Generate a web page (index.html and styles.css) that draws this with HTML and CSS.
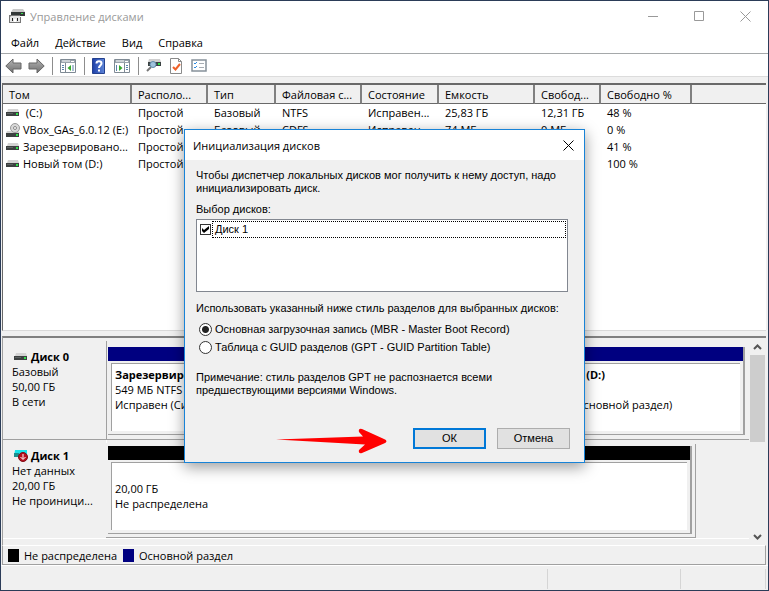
FILE: index.html
```html
<!DOCTYPE html>
<html lang="ru">
<head>
<meta charset="utf-8">
<title>Управление дисками</title>
<meta name="viewport" content="width=device-width, initial-scale=1">
<link rel="stylesheet" href="styles.css">
</head>
<body>
<svg class="defs" aria-hidden="true">
  <defs>
    <linearGradient id="metal" x1="0" y1="0" x2="0" y2="1">
      <stop offset="0" stop-color="#b4b4b4"/><stop offset="1" stop-color="#6f6f6f"/>
    </linearGradient>
    <linearGradient id="helpblue" x1="0" y1="0" x2="1" y2="0">
      <stop offset="0" stop-color="#1d3fa8"/><stop offset="1" stop-color="#5f86d8"/>
    </linearGradient>
    <symbol id="drive" viewBox="0 0 14 8">
      <path d="M2 0h10l1 3H1z" fill="#d3d3d3"/>
      <path d="M0 3h13v4H0z" fill="#3c4040"/>
      <path d="M1 4h6v1H1z" fill="#5d6262"/>
      <path d="M10 4h2v2h-2z" fill="#2fe04a"/>
    </symbol>
  </defs>
</svg>
<div class="window">
  <header class="titlebar">
    <svg class="app-icon" width="16" height="16" viewBox="0 0 16 16">
      <path d="M4 1h10l2 3H2z" fill="#c9c9c9"/>
      <path d="M2 4h14v4H2z" fill="#333838"/>
      <path d="M12 5h2v1h-2z" fill="#35e04c"/>
      <path d="M0 7h11v2h1v6H0z" fill="#777"/>
      <path d="M2 8h9v6H1V9z" fill="#e6e6e6"/>
      <path d="M3 10h1v3H3zM8 10h1v3H8z" fill="#222"/>
      <path d="M5 11h2v3H5z" fill="#fff"/>
    </svg>
    <h1 class="title">Управление дисками</h1>
    <div class="caption-buttons">
      <button type="button" aria-label="Свернуть"><svg width="11" height="11" viewBox="0 0 11 11"><path d="M0 5.500h10" stroke="#999" fill="none"/></svg></button>
      <button type="button" aria-label="Развернуть"><svg width="11" height="11" viewBox="0 0 11 11"><path d="M.5.5h9v9h-9z" stroke="#999" fill="none"/></svg></button>
      <button type="button" aria-label="Закрыть"><svg width="11" height="11" viewBox="0 0 11 11"><path d="M.5.500l10 10M10.500.5l-10 10" stroke="#999" fill="none"/></svg></button>
    </div>
  </header>
  <nav class="menu">
    <button type="button">Файл</button>
    <button type="button">Действие</button>
    <button type="button">Вид</button>
    <button type="button">Справка</button>
  </nav>
  <div class="toolbar">
    <button type="button" aria-label="Назад"><svg width="17" height="16" viewBox="0 0 17 16"><path d="M.8 8 8 1v4h8v6H8v4z" fill="url(#metal)" stroke="#666"/></svg></button>
    <button type="button" aria-label="Вперёд" class="second"><svg width="17" height="16" viewBox="0 0 17 16"><path d="M16.200 8 9 1v4H1v6h8v4z" fill="url(#metal)" stroke="#666"/></svg></button>
    <span class="sep"></span>
    <button type="button" aria-label="Дерево консоли"><svg width="17" height="14" viewBox="0 0 17 14"><path d="M.5.5h15v13H.5z" fill="#fff" stroke="#7f8a94"/><path d="M1 1h14v3H1z" fill="#9aa4ad"/><path d="M2 2h8M11 2.500h3" stroke="#fff"/><path d="M5.500 4v9" stroke="#7f8a94"/><path d="M2 6.500h2M2 8.500h2M2 10.500h2M13 6v6" stroke="#5a83ad"/><path d="M11 6v6L7.500 9z" fill="#35a82c"/></svg></button>
    <span class="sep"></span>
    <button type="button" aria-label="Справка"><svg width="14" height="16" viewBox="0 0 14 16"><path d="M.5.5h12v15H.5z" fill="url(#helpblue)" stroke="#24418f"/><path d="M4.500 5.500c0-3 5-3 5 0 0 2-2.500 2-2.500 4.500M7 11.500v2" fill="none" stroke="#fff" stroke-width="2"/></svg></button>
    <button type="button" aria-label="Область действий"><svg width="17" height="14" viewBox="0 0 17 14"><path d="M.5.5h15v13H.5z" fill="#fff" stroke="#7f8a94"/><path d="M1 1h14v3H1z" fill="#9aa4ad"/><path d="M2 2h8M11 2.500h3" stroke="#fff"/><path d="M10.500 4v9" stroke="#7f8a94"/><path d="M12 6.500h2M12 8.500h2M12 10.500h2M2.500 6v6" stroke="#5a83ad"/><path d="M5 6v6l3.500-3z" fill="#35a82c"/></svg></button>
    <span class="sep"></span>
    <button type="button" aria-label="Повторить проверку дисков"><svg width="16" height="13" viewBox="0 0 16 13"><path d="M3 0h11l1 3H2z" fill="#cfcfcf"/><path d="M2 3h13v4H2z" fill="#3b4242"/><path d="M12 4h2v2h-2z" fill="#2fe04a"/><path d="M1 12l4-4" stroke="#777" stroke-width="2"/><circle cx="7" cy="5.500" r="3" fill="#9fc3dd" stroke="#5f8aa8"/></svg></button>
    <button type="button" aria-label="Свойства"><svg width="13" height="16" viewBox="0 0 13 16"><path d="M.5.5h8l3 3v12H.5z" fill="#fff" stroke="#8a8a8a"/><path d="M8.500.5v3h3" fill="none" stroke="#8a8a8a"/><path d="M3 9l2.500 2.500L10 6" fill="none" stroke="#f0622a" stroke-width="2"/></svg></button>
    <button type="button" aria-label="Список"><svg width="17" height="13" viewBox="0 0 17 13"><path d="M1 1h14v11H1z" fill="#fff" stroke="#87919a" stroke-width="1.500"/><path d="M3 4l1 1 2-2M3 8l1 1 2-2" fill="none" stroke="#2c8be0"/><path d="M8 4.500h5M8 8.500h5" stroke="#a7adb3"/></svg></button>
  </div>

  <main class="panes">
    <section class="volumes">
      <table>
        <colgroup><col class="c-vol"><col class="c-lay"><col class="c-type"><col class="c-fs"><col class="c-state"><col class="c-cap"><col class="c-free"><col class="c-pct"><col></colgroup>
        <thead>
          <tr><th>Том</th><th>Располо...</th><th>Тип</th><th>Файловая с...</th><th>Состояние</th><th>Емкость</th><th>Свобод...</th><th>Свободно %</th><th></th></tr>
        </thead>
        <tbody>
          <tr><td><span class="vol"><svg width="14" height="8"><use href="#drive"/></svg>&nbsp;(C:)</span></td><td>Простой</td><td>Базовый</td><td>NTFS</td><td>Исправен...</td><td>25,83 ГБ</td><td>12,31 ГБ</td><td>48 %</td><td></td></tr>
          <tr><td><span class="vol"><svg width="14" height="14" viewBox="0 0 14 14"><path d="M1 8h11l2 2H0z" fill="#d3d3d3"/><path d="M0 10h13v4H0z" fill="#3c4040"/><path d="M10 11h2v2h-2z" fill="#2fe04a"/><circle cx="9" cy="5" r="4.500" fill="#d9d9d9" stroke="#999"/><circle cx="9" cy="5" r="1.500" fill="#fff" stroke="#888"/></svg>VBox_GAs_6.0.12 (E:)</span></td><td>Простой</td><td>Базовый</td><td>CDFS</td><td>Исправен...</td><td>74 МБ</td><td>0 МБ</td><td>0 %</td><td></td></tr>
          <tr><td><span class="vol"><svg width="14" height="8"><use href="#drive"/></svg>Зарезервировано...</span></td><td>Простой</td><td></td><td></td><td></td><td></td><td></td><td>41 %</td><td></td></tr>
          <tr><td><span class="vol"><svg width="14" height="8"><use href="#drive"/></svg>Новый том (D:)</span></td><td>Простой</td><td></td><td></td><td></td><td></td><td></td><td>100 %</td><td></td></tr>
        </tbody>
      </table>
    </section>

    <section class="disks">
      <div class="disk-list">
        <article class="disk">
          <div class="disk-info">
            <h2><svg width="14" height="8"><use href="#drive"/></svg>Диск 0</h2>
            <p>Базовый</p><p>50,00 ГБ</p><p>В сети</p>
          </div>
          <div class="map">
            <div class="part p-reserved primary"><div class="fill"><b>Зарезервировано</b><span>549 МБ NTFS</span><span>Исправен (Система)</span></div></div>
            <div class="part p-system primary"><div class="fill"></div></div>
            <div class="part p-data primary"><div class="fill"><b>Новый том&nbsp; (D:)</b><span></span><span>Исправен (Основной раздел)</span></div></div>
          </div>
        </article>
        <article class="disk selected">
          <div class="disk-info">
            <h2><svg width="14" height="12" viewBox="0 0 14 12"><path d="M1 0h12v7H0z" fill="#18e4ea"/><path d="M0 3h5v4H0z" fill="#1b8f8f"/><circle cx="9" cy="7" r="4.500" fill="#b80f1d" stroke="#7d0b14"/><path d="M9 4v5M6.500 7 9 9.500 11.500 7" fill="none" stroke="#fff"/></svg>Диск 1</h2>
            <p>Нет данных</p><p>20,00 ГБ</p><p>Не проиници...</p>
          </div>
          <div class="map short">
            <div class="part p-all unallocated"><div class="fill"><b></b><span>20,00 ГБ</span><span>Не распределена</span></div></div>
          </div>
        </article>
      </div>
      <div class="scrollbar">
        <svg width="9" height="6" viewBox="0 0 9 6"><path d="M1 5l3.500-3.500L8 5" fill="none" stroke="#555" stroke-width="2"/></svg>
        <div class="track"><div class="thumb"></div></div>
        <svg width="9" height="6" viewBox="0 0 9 6"><path d="M1 1l3.500 3.500L8 1" fill="none" stroke="#555" stroke-width="2"/></svg>
      </div>
    </section>
    <div class="legend">
      <span class="key"><i class="swatch black"></i>Не распределена</span>
      <span class="key"><i class="swatch navy"></i>Основной раздел</span>
    </div>
  </main>
  <footer class="status"><span class="cell grow"></span><span class="cell mid"></span><span class="cell end"></span></footer>

  <form class="dialog" role="dialog" aria-labelledby="dlg-title">
    <div class="dialog-title">
      <h2 id="dlg-title">Инициализация дисков</h2>
      <button type="button" aria-label="Закрыть окно"><svg width="11" height="11" viewBox="0 0 11 11"><path d="M.5.500l10 10M10.500.5l-10 10" stroke="#000" fill="none"/></svg></button>
    </div>
    <div class="dialog-body">
      <p>Чтобы диспетчер локальных дисков мог получить к нему доступ, надо инициализировать диск.</p>
      <p class="caption">Выбор дисков:</p>
      <div class="listbox">
        <input type="checkbox" id="disk1" checked><label for="disk1">Диск 1</label>
      </div>
      <p class="caption style-caption">Использовать указанный ниже стиль разделов для выбранных дисков:</p>
      <div class="radio"><input type="radio" name="style" id="mbr" checked><label for="mbr">Основная загрузочная запись (MBR - Master Boot Record)</label></div>
      <div class="radio"><input type="radio" name="style" id="gpt"><label for="gpt">Таблица с GUID разделов (GPT - GUID Partition Table)</label></div>
      <p class="note">Примечание: стиль разделов GPT не распознается всеми предшествующими версиями Windows.</p>
      <div class="actions">
        <svg class="pointer" width="112" height="26" viewBox="0 0 112 26" aria-hidden="true"><path d="M0 11.500 87 8.500 83 4Q82 0 86 1L108 11Q113 13 108 15.500L86 25Q82 26 83 22L89 16.500Z" fill="#f00"/></svg>
        <button type="button" class="default">ОК</button>
        <button type="button">Отмена</button>
      </div>
    </div>
  </form>
</div>
</body>
</html>
```
FILE: styles.css
```css
* { box-sizing: border-box; }

body {
  margin: 0;
  font: 11px/15px "Open Sans", "Noto Sans", sans-serif;
  color: #000;
  background: #f0f0f0;
}

h1, h2, p { margin: 0; font-size: inherit; font-weight: normal; }
svg { display: block; flex: none; }
.defs { position: absolute; width: 0; height: 0; }

button {
  font: inherit;
  color: inherit;
  border: 0;
  padding: 0;
  background: none;
}

.window {
  position: relative;
  display: flex;
  flex-direction: column;
  min-height: 100vh;
  border: 1px solid #2b3c58;
  background: #f0f0f0;
}

/* Title bar, menu and toolbar */
.titlebar {
  display: flex;
  align-items: center;
  height: 30px;
  padding-left: 8px;
  background: #fff;
}
.title { margin-left: 5px; color: #999; }
.caption-buttons { display: flex; margin-left: auto; }
.caption-buttons button {
  display: grid;
  place-items: center;
  width: 46px;
  height: 28px;
}

.menu {
  display: flex;
  gap: 16px;
  height: 23px;
  padding-left: 10px;
  border-bottom: 1px solid #a5a8aa;
  background: #fff;
}

.toolbar {
  display: flex;
  align-items: center;
  gap: 8px;
  height: 23px;
  padding: 1px 0 0 4px;
  border-bottom: 1px solid #dcdcdc;
  background: #fff;
}
.toolbar .second { margin-left: -2px; }
.sep { width: 1px; height: 18px; margin: 0 -1px; background: #8d8d8d; }

/* Volume table */
.panes { display: flex; flex: 1; flex-direction: column; padding: 6px 2px 0 1px; }
.volumes {
  flex: 1;
  min-height: 120px;
  border: 1px solid #696969;
  border-width: 2px 0 1px 1px;
  border-bottom-color: #d9d9d9;
  background: #fff;
}
table { width: 100%; border-collapse: separate; border-spacing: 0; table-layout: fixed; }
.c-vol { width: 129px; }
.c-lay { width: 76px; }
.c-type { width: 68px; }
.c-fs { width: 86px; }
.c-state { width: 77px; }
.c-cap { width: 96px; }
.c-free { width: 66px; }
.c-pct { width: 91px; }
th, td { padding: 0 0 0 6px; text-align: left; white-space: nowrap; font-weight: normal; overflow: hidden; }
th {
  height: 19px;
  background: #f0f0f0;
  border-right: 2px solid #808080;
  border-bottom: 1px solid #696969;
}
th:last-child { border-right: 0; }
td { height: 17px; }
td:first-child { padding-left: 3px; }
.vol { display: flex; align-items: center; gap: 3px; height: 17px; }

/* Disk map */
.disks {
  display: flex;
  margin-top: 5px;
  border-top: 2px solid #808080;
  border-left: 1px solid #a0a0a0;
}
.disk-list { flex: 1; padding: 3px 0 6px; }
.disk { display: flex; height: 99px; border-bottom: 1px solid #a0a0a0; }
.disk-info {
  width: 104px;
  padding: 8px 0 0 9px;
  border-right: 1px solid #a0a0a0;
  white-space: nowrap;
}
.disk-info h2 { display: flex; align-items: center; gap: 3px; height: 15px; font-weight: bold; padding-left: 2px; }
.disk + .disk .disk-info { border-right-color: #fff; }
.selected { border-bottom-color: #fff; }

.map { display: flex; flex: 1; min-width: 0; margin: 6px 4px 4px 1px; border: 1px solid #a0a0a0; border-width: 0 2px 1px 0; }
.map.short { flex: 0 1 584px; box-shadow: 0 0 0 3px #f0f0f0, 1px 1px 0 3px #a0a0a0; }
.part { display: flex; flex-direction: column; min-width: 0; padding: 0 3px 3px; border-top: 14px solid; }
.primary { border-top-color: #000080; }
.unallocated { border-top-color: #000; }
.p-reserved { flex: 0 0 140px; }
.p-system { flex: 1 1 263px; }
.p-data { flex: 0 0 234px; }
.p-all { flex: 1; }
.fill {
  flex: 1;
  margin-top: 2px;
  padding: 3px 0 0 3px;
  overflow: hidden;
  border: 1px solid #a0a0a0;
  border-width: 1px 0 0 1px;
  background: #fff;
  white-space: nowrap;
}
.fill b, .fill span { display: block; min-height: 15px; }

.scrollbar {
  display: flex;
  flex-direction: column;
  align-items: center;
  gap: 5px;
  width: 17px;
  padding: 6px 0 5px;
}
.track { flex: 1; width: 15px; }
.thumb { height: 50%; background: #cdcdcd; }

.legend {
  display: flex;
  align-items: center;
  gap: 6px;
  height: 20px;
  padding-left: 5px;
  border: 1px solid #a0a0a0;
  border-top-color: #fff;
}
.key { display: flex; align-items: center; gap: 5px; }
.swatch { width: 11px; height: 13px; }
.black { background: #000; }
.navy { background: #000080; }

.status { display: flex; height: 25px; padding: 3px 2px 1px 0; border-top: 1px solid #fff; }
.cell { border-right: 1px solid #d5d5d5; }
.grow { flex: 1; }
.mid { width: 133px; }
.end { width: 85px; }

/* Dialog */
.dialog {
  position: absolute;
  top: 128px;
  left: 0;
  right: 0;
  width: 401px;
  margin: 0 auto;
  border: 1px solid #1883d7;
  background: #f0f0f0;
  box-shadow: 0 4px 14px rgba(0, 0, 0, 0.4);
}
.dialog-title {
  display: flex;
  align-items: center;
  justify-content: space-between;
  height: 30px;
  padding: 0 10px 0 8px;
  background: #fff;
}
.dialog-body {
  padding: 9px 14px 8px 11px;
  font: 11px/13px "Liberation Sans", Arial, sans-serif;
}
.caption { margin-top: 8px; }
.listbox {
  display: flex;
  height: 73px;
  margin: 3px 2px 0 0;
  padding: 1px;
  border: 1px solid #828790;
  background: #fff;
}
.listbox label { flex: 1; height: 17px; padding-left: 2px; border: 1px dotted #000; line-height: 15px; }
.style-caption { margin-top: 10px; }
.radio { display: flex; align-items: center; gap: 3px; height: 18px; padding-left: 3px; }
.style-caption + .radio { margin-top: 5px; }
input { flex: none; appearance: none; margin: 0; border: 1px solid #333; background: #fff; }
input[type="checkbox"] { width: 11px; height: 11px; margin: 3px 1px 0 2px; }
input[type="checkbox"]:checked::before {
  content: "";
  display: block;
  height: 9px;
  background: #000;
  clip-path: polygon(1px 3px, 3px 5px, 8px 1px, 8px 4px, 3px 8px, 1px 6px);
}
input[type="radio"] { width: 13px; height: 13px; border-radius: 50%; }
input[type="radio"]:checked { background: radial-gradient(circle, #222 3px, #fff 4px); }
.note { margin-top: 15px; }
.actions { display: flex; align-items: flex-start; justify-content: flex-end; gap: 11px; margin-top: 31px; }
.pointer { margin-right: 14px; }
.actions button { width: 73px; height: 21px; border: 1px solid #adadad; background: #e1e1e1; }
.actions .default { border: 2px solid #0078d7; }
```
